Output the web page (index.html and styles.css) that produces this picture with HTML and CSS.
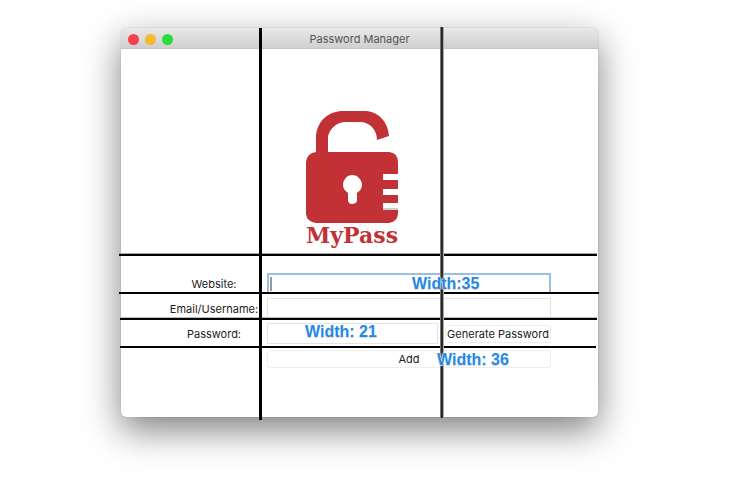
FILE: index.html
```html
<!DOCTYPE html>
<html lang="en">
<head>
<meta charset="utf-8">
<title>Password Manager</title>
<link rel="stylesheet" href="styles.css">
</head>
<body>
<main class="window">
  <header class="titlebar">
    <div class="lights">
      <button class="light close" type="button" aria-label="Close"></button>
      <button class="light minimise" type="button" aria-label="Minimise"></button>
      <button class="light expand" type="button" aria-label="Zoom"></button>
    </div>
    <h1 class="title">Password Manager</h1>
  </header>
  <form class="form">
    <svg class="logo" width="94" height="140" viewBox="0 0 94 140" role="img" aria-label="MyPass">
      <path class="red" d="M10 46V25C12 10 23 1 37 1H60C73 2 82 12 83 26L71 30C71 20 64 12 54 12H40C30 12 24 19 22 26V46Z"/>
      <path class="red" fill-rule="evenodd" d="M10 42H83Q92 43 92 52V64H77V70H92V79H77V85H92V93H77V99H92V104Q91 112 83 113H10Q1 112 0 104V52Q1 43 10 42ZM42 83V91Q43 94 46 94Q50 94 51 91V83C54 81 56 78 56 75C56 70 52 65 46 65C41 65 37 70 37 75C37 78 39 81 42 83Z"/>
      <path class="notch-shade" d="M77 98H92V100H77Z"/>
      <text class="wordmark red" x="46" y="133" text-anchor="middle">MyPass</text>
    </svg>
    <label class="label" for="website">Website:</label>
    <input class="field wide focused" id="website" type="text">
    <label class="label" for="email">Email/Username:</label>
    <input class="field wide" id="email" type="text">
    <label class="label" for="password">Password:</label>
    <input class="field" id="password" type="text">
    <button class="button" type="button">Generate Password</button>
    <button class="button wide" type="button">Add</button>
  </form>
  <div class="guide row r1"></div>
  <div class="guide row r2"></div>
  <div class="guide row r3"></div>
  <div class="guide row r4"></div>
  <div class="guide column first"></div>
  <div class="guide column second"></div>
  <span class="note n1">Width:35</span>
  <span class="note n2">Width: 21</span>
  <span class="note n3">Width: 36</span>
</main>
</body>
</html>
```
FILE: styles.css
```css
* {
  box-sizing: border-box;
}

body {
  margin: 0;
  padding: 28px 144px 64px 121px;
  background: #fff;
  color: #222;
  font: 11px/16px Inter, "Liberation Sans", sans-serif;
}

.window {
  position: relative;
  border-radius: 5px;
  background: #fff;
  box-shadow: 0 0 1px rgba(0, 0, 0, 0.4), 0 13px 36px rgba(0, 0, 0, 0.5);
}

.titlebar {
  display: grid;
  grid-template-columns: 1fr auto 1fr;
  align-items: center;
  height: 21px;
  padding: 2px 7px 0;
  border-bottom: 1px solid #c4c4c4;
  border-radius: 5px 5px 0 0;
  background: linear-gradient(#e9e9e9, #cfcfcf);
}

.lights {
  display: flex;
  gap: 6px;
}

.light {
  width: 11px;
  height: 11px;
  padding: 0;
  border: 0;
  border-radius: 50%;
}

.close {
  background: #f2414d;
}

.minimise {
  background: #f6b92f;
}

.expand {
  background: #2cdc38;
}

.title {
  margin: 0;
  color: #555;
  font-size: 11px;
  font-weight: 400;
}

.form {
  display: grid;
  grid-template-columns: 92px 1fr 106px;
  grid-auto-rows: 21px;
  grid-template-rows: auto;
  gap: 4px 7px;
  align-items: center;
  padding: 61px 47px 48px;
}

.logo {
  grid-column: 2;
  justify-self: center;
  margin-bottom: 19px;
}

.red {
  fill: #c23135;
}

.notch-shade {
  fill: #ccc;
}

.wordmark {
  font: bold 22px "DejaVu Serif", serif;
}

.label {
  grid-column: 1;
  text-align: center;
  white-space: nowrap;
}

.field {
  width: 100%;
  height: 21px;
  padding: 0 4px;
  border: 1px solid #e4e4e4;
  background: #fff;
  font: inherit;
  outline: 0;
}

.wide {
  grid-column: 2 / 4;
}

.focused {
  border: 2px solid #9bbfe2;
  background: linear-gradient(#999, #999) 1px center / 2px 14px no-repeat #fff;
}

.button {
  height: 18px;
  padding: 0;
  border: 1px solid #ededed;
  border-radius: 3px;
  background: #fff;
  color: inherit;
  font: inherit;
  white-space: nowrap;
}

.guide {
  position: absolute;
  background: #000;
}

.column {
  top: 0;
  bottom: -3px;
  width: 3px;
}

.first {
  left: 138px;
}

.second {
  top: -1px;
  bottom: -1px;
  left: 319px;
  width: 4px;
  background: linear-gradient(90deg, #777 1px, #222 1px, #333 3px, #aaa 3px);
}

.row {
  right: 1px;
  left: -1px;
  height: 2px;
}

.r1 {
  top: 226px;
  left: -2px;
  box-shadow: 0 -1px #aaa;
}

.r2 {
  top: 264px;
  right: -1px;
  left: -2px;
}

.r3 {
  top: 290px;
  box-shadow: 0 -1px #bbb;
}

.r4 {
  top: 318px;
  right: 2px;
}

.note {
  position: absolute;
  color: #2489e4;
  font: bold 16px/20px "Liberation Sans", Arial, sans-serif;
  text-shadow: 0 0 2px #fff, 0 0 2px #fff, 0 1px 1px #bbb;
  white-space: nowrap;
}

.n1 {
  top: 246px;
  left: 291px;
}

.n2 {
  top: 294px;
  left: 184px;
}

.n3 {
  top: 322px;
  left: 316px;
}
```
